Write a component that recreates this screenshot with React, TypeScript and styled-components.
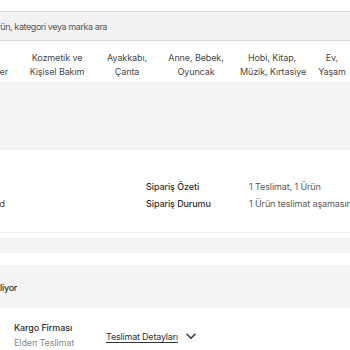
import React from "react";
import styled, { createGlobalStyle } from "styled-components";

const Global = createGlobalStyle`
  html, body { margin: 0; padding: 0; background: #fff; }
  body { font-family: Inter, "Noto Sans", "Liberation Sans", sans-serif; color: #333; }
  * { box-sizing: border-box; }
`;

const Page = styled.div`
  width: 350px;
  height: 350px;
  overflow: hidden;
  display: flex;
  flex-direction: column;
  background: #fff;
  font-size: 9px;
  letter-spacing: -0.1px;
`;

/* An element that ends at a given x and spills its text to the left edge */
const CutEnd = styled.span<{ $end: number }>`
  width: ${(p) => p.$end}px;
  flex: none;
  display: flex;
  justify-content: flex-end;
  white-space: nowrap;
`;

const SearchWrap = styled.div`
  padding-top: 11px;
  height: 41px;
  flex: none;
`;

const SearchBar = styled.div`
  height: 30px;
  background: #f3f3f3;
  border-top: 1.5px solid #d4d4d4;
  border-bottom: 1.5px solid #d4d4d4;
  display: flex;
  align-items: center;
  color: #555;
  padding-top: 1px;
  letter-spacing: -0.42px;
`;

const Nav = styled.nav`
  height: 41px;
  flex: none;
  display: flex;
  align-items: center;
  padding-top: 7px;
  color: #484848;
  line-height: 14px;
`;

const NavItem = styled.div<{ $w: number }>`
  width: ${(p) => p.$w}px;
  flex: none;
  text-align: center;
  white-space: nowrap;
`;

const FirstNav = styled(CutEnd)`
  align-self: flex-end;
  padding-bottom: 3px;
  margin-right: 4px;
`;

const GrayBlock = styled.div<{ $h: number; $line?: boolean }>`
  height: ${(p) => p.$h}px;
  flex: none;
  background: #f4f4f4;
  border-bottom: ${(p) => (p.$line ? "1px solid #ececec" : "none")};
  display: flex;
  align-items: center;
`;

const Spacer = styled.div<{ $h: number }>`
  height: ${(p) => p.$h}px;
  flex: none;
`;

const Summary = styled.section`
  height: 83px;
  flex: none;
  border-bottom: 1px solid #f0f0f0;
  display: flex;
  flex-direction: column;
  padding-top: 29px;
  gap: 3px;
`;

const SummaryRow = styled.div`
  display: flex;
  align-items: center;
  height: 14px;
`;

const LeftCell = styled.span`
  width: 146px;
  flex: none;
  display: flex;
  color: #444;
`;

const Label = styled.span`
  width: 103px;
  flex: none;
  font-weight: 500;
  color: #2f2f2f;
`;

const Value = styled.span`
  color: #5a5a5a;
  white-space: nowrap;
`;

const StatusText = styled(CutEnd)`
  font-weight: 500;
  color: #333;
  padding-top: 1px;
  letter-spacing: -0.3px;
`;

const Delivery = styled.div`
  display: flex;
  align-items: center;
  padding: 14px 0 0 14px;
`;

const Carrier = styled.div`
  width: 92px;
  display: flex;
  flex-direction: column;
  gap: 4px;
`;

const CarrierName = styled.span`
  color: #2f2f2f;
  font-weight: 500;
`;

const CarrierSub = styled.span`
  color: #8a8a8a;
`;

const DetailLink = styled.a`
  color: #333;
  text-decoration: underline;
  text-underline-offset: 2px;
  display: flex;
  align-items: center;
  gap: 8px;
  margin-top: 2px;
  letter-spacing: -0.2px;
`;

const cats: [string, string, number][] = [
  ["Kozmetik ve", "Kişisel Bakım", 90],
  ["Ayakkabı,", "Çanta", 50],
  ["Anne, Bebek,", "Oyuncak", 88],
  ["Hobi, Kitap,", "Müzik, Kırtasiye", 64],
  ["Ev,", "Yaşam", 56],
];

export default function App() {
  return (
    <Page>
      <Global />
      <SearchWrap>
        <SearchBar>
          <CutEnd $end={107}>Ürün, kategori veya marka ara</CutEnd>
        </SearchBar>
      </SearchWrap>
      <Nav>
        <FirstNav $end={8}>Süpermarketler</FirstNav>
        {cats.map(([a, b, w], i) => (
          <NavItem key={i} $w={w}>
            {a}
            <br />
            {b}
          </NavItem>
        ))}
      </Nav>
      <GrayBlock $h={68} $line />
      <Summary>
        <SummaryRow>
          <LeftCell />
          <Label>Sipariş Özeti</Label>
          <Value>1 Teslimat, 1 Ürün</Value>
        </SummaryRow>
        <SummaryRow>
          <LeftCell>
            <CutEnd $end={5}>Tamamlandı · Sipariş No: Hazırland</CutEnd>
          </LeftCell>
          <Label>Sipariş Durumu</Label>
          <Value>1 Ürün teslimat aşamasında</Value>
        </SummaryRow>
      </Summary>
      <Spacer $h={5} />
      <GrayBlock $h={15} />
      <Spacer $h={12} />
      <GrayBlock $h={43}>
        <StatusText $end={17}>Teslim Ediliyor</StatusText>
      </GrayBlock>
      <Delivery>
        <Carrier>
          <CarrierName>Kargo Firması</CarrierName>
          <CarrierSub>Elden Teslimat</CarrierSub>
        </Carrier>
        <DetailLink>
          Teslimat Detayları
          <svg width="10" height="7" viewBox="0 0 10 7" fill="none">
            <path d="M1 1.2L5 5.2L9 1.2" stroke="#333" strokeWidth="1.5" strokeLinecap="round" strokeLinejoin="round" />
          </svg>
        </DetailLink>
      </Delivery>
    </Page>
  );
}
